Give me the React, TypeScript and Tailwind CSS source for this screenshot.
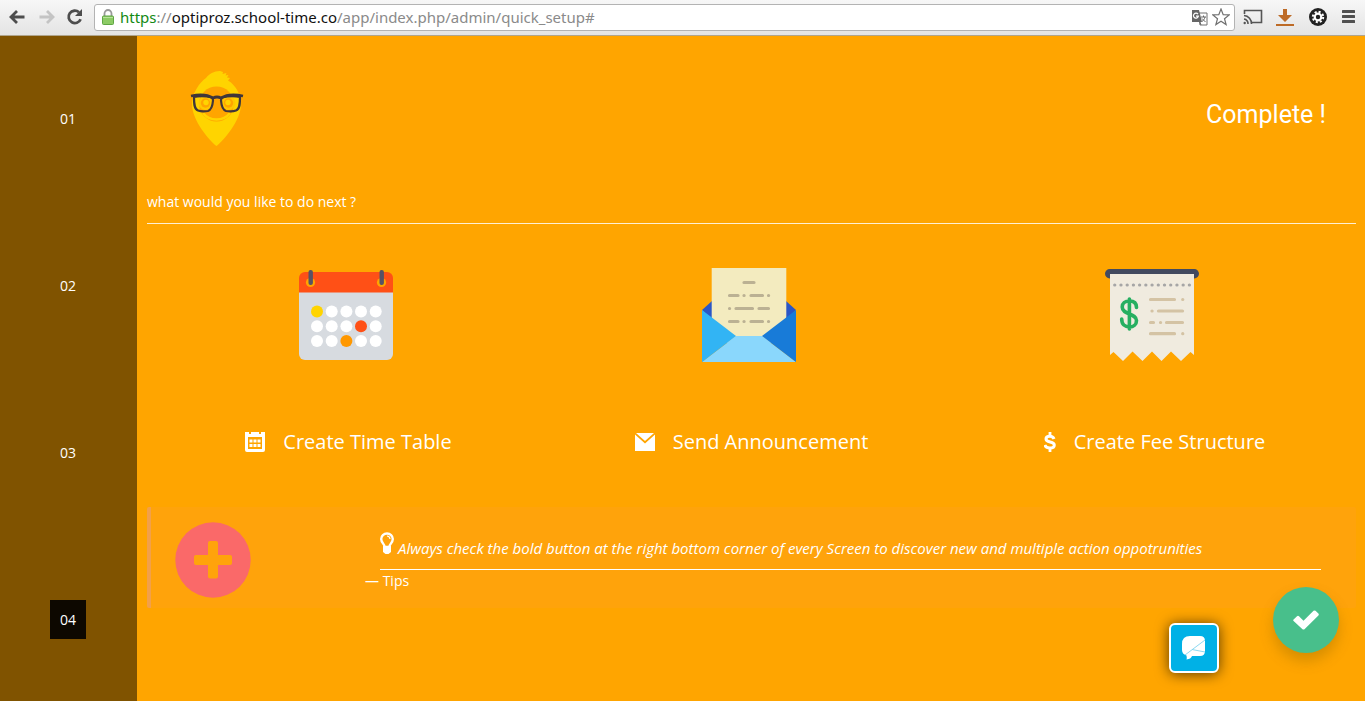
import type { ReactNode } from "react";

const steps = ["01", "02", "03", "04"];

function BrowserBar() {
  return (
    <header className="flex h-9 shrink-0 items-center border-b border-[#b0a58c] bg-linear-to-b from-[#f7f7f7] to-[#e4e4e4] pr-2 pb-px pl-2">
      <nav className="flex items-center gap-3" aria-label="Browser">
        <button type="button" aria-label="Back">
          <svg width="18" height="18" viewBox="0 0 18 18" fill="none" stroke="#4d4d4d" strokeWidth="2.8">
            <path d="M16.500 9H3.500M9 3 3 9l6 6" />
          </svg>
        </button>
        <button type="button" aria-label="Forward">
          <svg width="18" height="18" viewBox="0 0 18 18" fill="none" stroke="#c4c4c4" strokeWidth="2.8">
            <path d="M1.500 9h13M9 3l6 6-6 6" />
          </svg>
        </button>
        <button type="button" aria-label="Reload" className="-ml-0.5">
          <svg width="18" height="18" viewBox="0 0 18 18">
            <path d="M14.6 11.2A6.2 6.2 0 1 1 13 4.3" fill="none" stroke="#4d4d4d" strokeWidth="2.8" />
            <path d="M16 1v7H9z" fill="#4d4d4d" />
          </svg>
        </button>
      </nav>
      <div className="ml-2.5 flex h-[27px] flex-1 items-center rounded-[3px] border border-[#b3b3b3] bg-white pr-1 pl-[7px]">
        <svg width="12" height="16" viewBox="0 0 12 16" aria-hidden="true">
          <path d="M2.5 8V4.5a3.5 3.5 0 0 1 7 0V8" fill="none" stroke="#9a9a9a" strokeWidth="1.8" />
          <rect x=".5" y="7" width="11" height="8.5" rx="1" fill="#8ccb65" stroke="#5fa644" />
          <path d="M1 8.5h10" stroke="#b9e39b" />
        </svg>
        <div
          role="textbox"
          aria-label="Address"
          contentEditable
          suppressContentEditableWarning
          className="ml-1.5 flex-1 font-['Noto_Sans',sans-serif] text-[15px] leading-6 whitespace-nowrap text-[#8a8a8a] outline-none"
        >
          <span className="text-[#138a13]">https</span>://<span className="text-[#111]">optiproz.school-time.co</span>
          /app/index.php/admin/quick_setup#
        </div>
        <button type="button" aria-label="Translate this page">
          <svg width="17" height="17" viewBox="0 0 17 17" fill="none">
            <path d="M7 4h9v12H9z" fill="#fff" stroke="#707070" />
            <path d="M1 1h7l3 12H1z" fill="#666" />
            <path d="M7 5.2a2.5 2.5 0 1 0 .4 2H5" stroke="#fff" strokeWidth="1.2" />
            <path d="M10 8h5M12.5 6.5V8M14 8c-.5 2-1.500 3.500-3 4.500M11 9.500l3.500 3.500M9 13l1 3" stroke="#666" />
          </svg>
        </button>
        <button type="button" aria-label="Bookmark this page" className="ml-1">
          <svg width="18" height="18" viewBox="0 0 18 18" fill="none" stroke="#707070" strokeWidth="1.2">
            <path d="m9 1 2.200 5.600 6 .3-4.700 3.800 1.600 5.900L9 13.300l-5.100 3.300 1.600-5.900L.8 6.900l6-.3z" />
          </svg>
        </button>
      </div>
      <div className="ml-2 flex items-center gap-[15px]">
        <button type="button" aria-label="Cast">
          <svg width="20" height="16" viewBox="0 0 20 16" fill="none" stroke="#555" strokeWidth="1.6">
            <path d="M1.500 5V1.500h17v12H9M1 6.500a8 8 0 0 1 7.500 8.500M1 10a4.500 4.500 0 0 1 4 5" />
            <circle cx="1.700" cy="14" r="1.200" fill="#555" stroke="none" />
          </svg>
        </button>
        <button type="button" aria-label="Downloads" className="-ml-0.5">
          <svg width="18" height="17" viewBox="0 0 18 17" fill="#bd6b27">
            <path d="M7 0h4v6h5l-7 7-7-7h5zM0 15h18v2H0z" />
          </svg>
        </button>
        <button type="button" aria-label="Extension settings">
          <svg width="18" height="18" viewBox="0 0 18 18">
            <circle cx="9" cy="9" r="9" fill="#222" />
            <circle cx="9" cy="9" r="3.300" fill="none" stroke="#fff" strokeWidth="2.200" />
            <circle cx="9" cy="9" r="5.200" fill="none" stroke="#fff" strokeWidth="2" strokeDasharray="2.080 2" />
          </svg>
        </button>
        <button type="button" aria-label="Menu" className="mr-0.5">
          <svg width="13" height="14" viewBox="0 0 13 14" fill="#505050">
            <rect y="0" width="13" height="3" rx=".5" />
            <rect y="5" width="13" height="3" rx=".5" />
            <rect y="10" width="13" height="3" rx=".5" />
          </svg>
        </button>
      </div>
    </header>
  );
}

function Mascot() {
  return (
    <svg width="54" height="78" viewBox="0 0 54 78" role="img" aria-label="School Time">
      <path
        d="M26.500 76C20 71 2 51 2 34 2 23 10 12 16 8c3-4 8-7 14-7l3 1-.5 2 4-1-1 2.500 3-.5-1.500 2.500 3 .5-2 2.500 3 2C47 18 51 26 51 34 51 51 33 71 26.500 76z"
        fill="#ffd400"
      />
      <circle cx="26.500" cy="34" r="17.500" fill="#ffa500" />
      <circle cx="15.500" cy="33" r="7" fill="#ffc800" />
      <circle cx="38.500" cy="33" r="7" fill="#ffc800" />
      <circle cx="15.500" cy="33" r="4.700" fill="#ffa500" />
      <circle cx="38.500" cy="33" r="4.700" fill="#ffa500" />
      <circle cx="16" cy="32.500" r="2.700" fill="#ffd400" />
      <circle cx="38" cy="32.500" r="2.700" fill="#ffd400" />
      <path d="M13 43c3 4 8 6.500 13.500 6.500S37 47 40 43" fill="none" stroke="#ffd400" strokeWidth="2.400" />
      <g fill="none" stroke="#40363a" strokeLinejoin="round">
        <path strokeWidth="2.200" d="M4 27q8-2 18 .5 1 1 1 3c-.5 6-2 9.500-5 10.500q-6 1-10-.5C4 39 4 33 4 27zM50 27q-8-2-18 .5-1 1-1 3c.5 6 2 9.500 5 10.500q6 1 10-.5C50 39 50 33 50 27z" />
        <path strokeWidth="2.800" d="M1 26q14-3 22 2 4-2 8 0 8-5 22-2" />
      </g>
    </svg>
  );
}

const dotX = [18, 32.700, 47.400, 62, 76.700];
const dotY = [43.500, 58.300, 73];
const dotFills: Record<string, string> = { "0-0": "#ffd400", "1-3": "#ff5016", "2-2": "#ff9800" };

function CalendarArt() {
  return (
    <svg width="94" height="94" viewBox="0 0 94 94" role="img" aria-label="Calendar">
      <path d="M0 22h94v64a6 6 0 0 1-6 6H6a6 6 0 0 1-6-6z" fill="#d7dbe0" />
      <path d="M0 24.500V10a6 6 0 0 1 6-6h82a6 6 0 0 1 6 6v14.500z" fill="#ff5016" />
      {[11.500, 82.500].map((x) => (
        <g key={x}>
          <circle cx={x} cy="14.500" r="4.600" fill="#ffa500" />
          <rect x={x - 2} y="2" width="4.400" height="15" rx="2" fill="#585265" />
        </g>
      ))}
      {dotY.map((y, row) =>
        dotX.map((x, col) => (
          <circle key={`${row}-${col}`} cx={x} cy={y} r="6" fill={dotFills[`${row}-${col}`] ?? "#fff"} />
        )),
      )}
    </svg>
  );
}

function EnvelopeArt() {
  return (
    <svg width="94" height="94" viewBox="0 0 94 94" role="img" aria-label="Letter">
      <path d="M0 42 10 33h74l10 9-12 12H12z" fill="#2a56c6" />
      <path d="M9.700 0h74.600v75H9.700z" fill="#f3ebbf" />
      <path d="M0 94 34 68h26l34 26z" fill="#8ad7fc" />
      <path d="M0 42v52l34-26z" fill="#32b4f4" />
      <path d="M94 42v52L60 68z" fill="#187bd8" />
      <path
        d="M42 14.500h10M27.500 27.500h8.500M42 27.500h.1M49 27.500h11.500M66.500 27.500h.1M27.500 40.500h.1M34 40.500h16.500M57 40.500h9.500M27.500 53.500h8.500M42 53.500h.1M49 53.500h11.500M66.500 53.500h.1"
        stroke="#bbb193"
        strokeWidth="3.200"
        strokeLinecap="round"
      />
    </svg>
  );
}

function ReceiptArt() {
  return (
    <svg width="94" height="94" viewBox="0 0 94 94" role="img" aria-label="Receipt">
      <path d="M4.700 5.700h84.600" stroke="#424a60" strokeWidth="9.400" strokeLinecap="round" />
      <path
        d="M5 6h84v81l-3.500-3L76 93 66 83.500 56.500 93 47 83.500 37.500 93 27.500 83.500 18 93 8.500 84 5 87z"
        fill="#f0ebdf"
      />
      <path d="M9.700 17h75.500" stroke="#a6a6a6" strokeWidth="3.200" strokeLinecap="round" strokeDasharray=".1 6.120" />
      <path
        d="M31.500 39.500C31.500 35 28.500 33 24.500 33c-4.500 0-7.300 2.500-7.300 6 0 8 14.300 6 14.300 13.500 0 4-3 6.500-7 6.500-4.500 0-7.800-2.500-7.800-8M24.400 31v30"
        fill="none"
        stroke="#26af61"
        strokeWidth="3.600"
        strokeLinecap="round"
      />
      <path
        d="M45.500 31.500h24M77.700 31.500h.1M47 43h.1M53.500 43h24M45.500 54.500h3M55.500 54.500h.1M61.500 54.500h16M45.500 65.700h24M77.700 65.700h.1"
        stroke="#d4c3a4"
        strokeWidth="3.200"
        strokeLinecap="round"
      />
    </svg>
  );
}

function CalendarIcon() {
  return (
    <svg width="20" height="20" viewBox="0 0 20 20" fill="#fff" aria-hidden="true">
      <path
        fillRule="evenodd"
        d="M0 0h4v2h2V0h8v2h2V0h4v18a2 2 0 0 1-2 2H2a2 2 0 0 1-2-2zM3 5v12h14V5z"
      />
      <path d="M4.500 7.500h3v3h-3zM8.500 7.500h3v3h-3zM12.500 7.500h3v3h-3zM4.500 12h3v3h-3zM8.500 12h3v3h-3zM12.500 12h3v3h-3z" />
    </svg>
  );
}

function MailIcon() {
  return (
    <svg width="20" height="20" viewBox="0 0 20 20" fill="#fff" aria-hidden="true">
      <path d="M1 1h18l-9 8zM0 2.500l10 9 10-9V19H0z" />
    </svg>
  );
}

function DollarIcon() {
  return (
    <svg width="12" height="20" viewBox="0 0 12 20" fill="none" stroke="#fff" aria-hidden="true">
      <path
        strokeWidth="3"
        d="M10 7Q9 4.300 6 4.300C3.500 4.300 2 5.300 2 7c0 4 8.300 2 8.300 6 0 2-1.500 3-4.500 3-2.500 0-4.300-1-5-3"
      />
      <path strokeWidth="2.800" d="M6 0v5M6 15v5" />
    </svg>
  );
}

function ActionCard({ art, icon, title }: { art: ReactNode; icon: ReactNode; title: string }) {
  return (
    <a href="#" className="flex flex-col items-center">
      <span className="pr-1.5">{art}</span>
      <span className="mt-[66px] flex items-center gap-[18px] text-[20px] leading-7 text-white">
        {icon}
        {title}
      </span>
    </a>
  );
}

function Tips() {
  return (
    <section className="mt-[51px] flex h-[101px] rounded-xs border-l-4 border-[#f2a04a] bg-[#ffa30b]">
      <svg width="76" height="76" viewBox="0 0 76 76" className="mt-[15px] ml-6 shrink-0" aria-hidden="true">
        <circle cx="38" cy="38" r="37.700" fill="#fa6969" />
        <g fill="#ffa30b">
          <rect x="33" y="19" width="10" height="37.500" rx="2" />
          <rect x="19" y="33" width="38" height="10" rx="2" />
        </g>
      </svg>
      <div className="mt-[25px] mr-[35px] ml-[114px] flex-1 text-sm">
        <p className="ml-[15px] flex h-[38px] items-start border-b border-white">
          <svg width="14" height="22" viewBox="0 0 14 22" className="mr-1 shrink-0" aria-hidden="true">
            <path
              d="M4.700 15c0-3-3.500-4-3.500-8a5.800 5.500 0 0 1 11.600 0c0 4-3.500 5-3.500 8z"
              fill="none"
              stroke="#fff"
              strokeWidth="2.400"
            />
            <path d="M3 14h8v6L8.500 22h-3L3 20z" fill="#fff" />
            <path d="M7 4q2.800.2 3 3" fill="none" stroke="#fff" strokeWidth="1.200" />
          </svg>
          <em className="pt-1.5 text-[15px] leading-5">
            Always check the bold button at the right bottom corner of every Screen to discover new and multiple action
            oppotrunities
          </em>
        </p>
        <p className="mt-px leading-5">— Tips</p>
      </div>
    </section>
  );
}

export default function App() {
  return (
    <div className="flex h-screen flex-col overflow-hidden bg-[#ffa500] font-['Open_Sans',sans-serif] text-white">
      <BrowserBar />
      <div className="flex min-h-0 flex-1">
        <nav aria-label="Setup steps" className="w-[137px] shrink-0 overflow-hidden bg-[#805300] pr-px text-sm">
          <div className="-mt-px">
            {steps.map((step) => (
              <div key={step} className="flex h-[167px] items-center justify-center">
                <a
                  href="#"
                  aria-current={step === "04" ? "step" : undefined}
                  className={
                    step === "04"
                      ? "flex h-[39px] w-9 items-center justify-center bg-[#0d0800]"
                      : "flex h-[39px] w-9 items-center justify-center"
                  }
                >
                  {step}
                </a>
              </div>
            ))}
          </div>
        </nav>
        <main className="min-w-0 flex-1 pr-[9px] pl-2.5">
          <div className="flex h-[156px] items-center justify-between pr-[30px] pl-[43px]">
            <div className="-mt-2.5">
              <Mascot />
            </div>
            <h1 className="pt-0.5 font-[Roboto,sans-serif] text-[25px]">Complete !</h1>
          </div>
          <h2 className="h-8 border-b border-[#fff0d4] text-sm leading-5">what would you like to do next ?</h2>
          <div className="mt-11 grid grid-cols-3">
            <ActionCard art={<CalendarArt />} icon={<CalendarIcon />} title="Create Time Table" />
            <ActionCard art={<EnvelopeArt />} icon={<MailIcon />} title="Send Announcement" />
            <ActionCard art={<ReceiptArt />} icon={<DollarIcon />} title="Create Fee Structure" />
          </div>
          <Tips />
        </main>
      </div>
      <button
        type="button"
        aria-label="Open chat"
        className="fixed right-[146px] bottom-7 flex size-[50px] items-center justify-center rounded-md border-2 border-white bg-[#00b1e6] shadow-[0_1px_14px_rgba(0,0,0,0.65)]"
      >
        <svg width="24" height="24" viewBox="0 0 24 24">
          <path d="M8 0h10q5 0 5 5v10q0 5-5 5H10q-1 3-5.500 3.500 .5-2 0-4Q0 18 0 14V8q0-8 8-8z" fill="#fff" />
          <path d="M23 4 3 19M10 13.500l13 2.500" stroke="#7fd4ee" strokeWidth=".9" fill="none" />
        </svg>
      </button>
      <button
        type="button"
        aria-label="Finish"
        className="fixed right-[26px] bottom-12 flex size-[66px] items-center justify-center rounded-full bg-[#48bf8b] shadow-[0_8px_14px_rgba(120,90,0,0.3)]"
      >
        <svg width="26" height="20" viewBox="0 0 26 20" fill="#fff">
          <path d="M.6 9.500 4 6.200q1-.8 2 0l4.500 4.500L20.500.8q1-.8 2 0l2.900 2.800q.8 1 0 2L11.500 19.200q-1 .8-2 0L.6 11q-.8-.8 0-1.500z" />
        </svg>
      </button>
    </div>
  );
}
